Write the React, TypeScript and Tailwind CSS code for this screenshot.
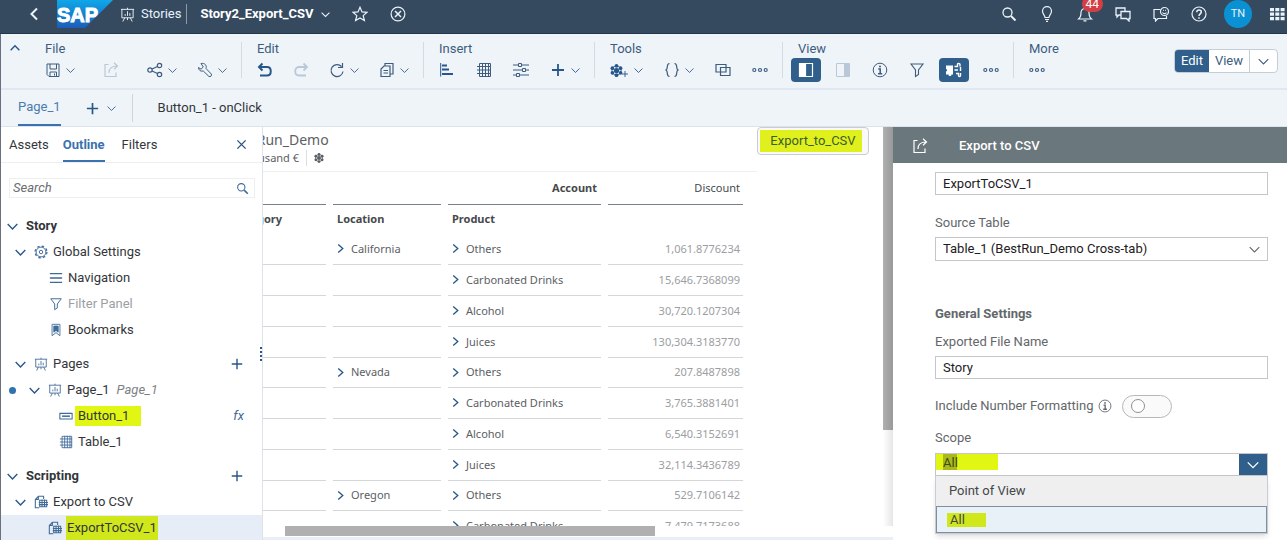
import { useState } from 'react';
import type { ReactNode } from 'react';
import clsx from 'clsx';

type IconProps = {
  children: ReactNode;
  className?: string;
  width?: string;
};

const Icon = ({ children, className = 'size-4', width = '1' }: IconProps) => (
  <svg
    viewBox="0 0 16 16"
    fill="none"
    stroke="currentColor"
    strokeWidth={width}
    className={clsx('shrink-0', className)}
    aria-hidden="true"
  >
    {children}
  </svg>
);

const ChevronDown = ({ className = 'w-[9px] h-[9px]', width = '1.8' }) => (
  <Icon className={className} width={width}>
    <path d="M1 4.5l7 7 7-7" />
  </Icon>
);

const BoardIcon = ({ className = 'size-4' }) => (
  <Icon className={className}>
    <path d="M1 2.5h14M2 2.5v9h12v-9M5 11.5l-2 4M11 11.5l2 4M8 11.5v2.5M5.5 9.5v-2M8 9.5v-5M10.5 9.5v-3M8 .8v1.7" />
  </Icon>
);

const GridIcon = ({ className = 'size-4' }) => (
  <Icon className={className}>
    <path d="M3.5 1.5h11v13h-11zM1 4.5h14M1 8h14M1 11.5h14M6.5 1v14M9.5 1v14M12.5 1v14" />
  </Icon>
);

const FunnelIcon = ({ className = 'size-4' }) => (
  <Icon className={className} width="1.1">
    <path d="M2 2h12L9.5 8v4.5L6.5 14.5V8z" />
  </Icon>
);

const InfoIcon = ({ className = 'size-4' }) => (
  <Icon className={className}>
    <circle cx="8" cy="8" r="6.8" />
    <path d="M6.300 7h1.900v4.500M6 11.700h4.200" strokeWidth="1.500" />
    <circle cx="8" cy="4.500" r="1" fill="currentColor" stroke="none" />
  </Icon>
);

const ExportIcon = ({ className = 'size-4' }) => (
  <Icon className={className} width="1.2">
    <path d="M5.500 2.500H2v12h11v-4M6 11c0-5 3-7 8-7M11 .8L14.500 4 11 7.200" />
  </Icon>
);

const SheetIcon = () => (
  <Icon className="size-[14px]" width="1.2">
    <path d="M6 14.500H1.500V5L5 1.500h6v3M5 1.500V5H1.500" />
    <path d="M6.500 6h8v7.500h-8zM5.500 8.500H16M5.500 11H16M9.200 5v9M12 5v9" />
  </Icon>
);

const MoreIcon = () => (
  <Icon width="1.200">
    <circle cx="2.300" cy="8" r="1.500" />
    <circle cx="8" cy="8" r="1.500" />
    <circle cx="13.700" cy="8" r="1.500" />
  </Icon>
);

const PlusIcon = ({ className = 'size-4', width = '1.8' }) => (
  <Icon className={className} width={width}>
    <path d="M8 2v12M2 8h12" />
  </Icon>
);

const SearchIcon = ({ className = 'size-4' }) => (
  <Icon className={className} width="1.3">
    <circle cx="6.500" cy="6.500" r="4.500" />
    <path d="M10 10l4.500 4.500" strokeWidth="2" />
  </Icon>
);

const ModelIcon = ({ className = 'size-4' }) => (
  <Icon className={className} width="1.2">
    <circle cx="8" cy="8" r="3.200" fill="currentColor" stroke="none" />
    <g fill="currentColor" stroke="none">
      <circle cx="8" cy="2.300" r="2.300" />
      <circle cx="13" cy="5.100" r="2.300" />
      <circle cx="13" cy="10.900" r="2.300" />
      <circle cx="8" cy="13.700" r="2.300" />
      <circle cx="3" cy="10.900" r="2.300" />
      <circle cx="3" cy="5.100" r="2.300" />
    </g>
    <circle cx="8" cy="8" r="5.600" />
  </Icon>
);

type ToolProps = {
  label: string;
  children: ReactNode;
  menu?: boolean;
  pressed?: boolean;
  disabled?: boolean;
  className?: string;
};

const Tool = ({ label, children, menu, pressed, disabled, className }: ToolProps) => (
  <button
    aria-label={label}
    disabled={disabled}
    className={clsx(
      'flex h-6 items-center gap-[5px]',
      pressed && '-mx-[7px] rounded-sm bg-[#2f5f8a] px-[7px] text-white',
      disabled && 'text-[#b9c8d8]',
      className
    )}
  >
    {children}
    {menu && <ChevronDown width="1.6" />}
  </button>
);

type GroupProps = {
  title: string;
  children: ReactNode;
  last?: boolean;
  className?: string;
};

const Group = ({ title, children, last, className = 'gap-[21px] pl-[15px]' }: GroupProps) => (
  <section className="flex py-2">
    <div className="pr-[14px]">
      <h2 className={clsx('flex h-[14px] text-[13px] leading-[14px]', className)}>{title}</h2>
      <div className={clsx('mt-[2px] flex items-center', className)}>{children}</div>
    </div>
    {!last && <div className="h-9 w-px bg-[#d3dce5]" />}
  </section>
);

const ShellBar = () => (
  <header className="flex h-[34px] shrink-0 items-center border-b border-[#22364c] bg-[#354a5f] pr-[2px] pb-[5px] text-[13px] text-[#eaf3fb]">
    <button aria-label="Back" className="ml-[26px]">
      <Icon width="2">
        <path d="M11 2.500L5.500 8l5.500 5.500" />
      </Icon>
    </button>
    <svg viewBox="0 0 56 28" className="ml-[15px] h-7 w-14" role="img" aria-label="SAP">
      <defs>
        <linearGradient id="sap" x1="0" y1="0" x2="0" y2="1">
          <stop offset="0" stopColor="#0fa7e8" />
          <stop offset="1" stopColor="#1c5cb8" />
        </linearGradient>
      </defs>
      <path d="M0 0h56L28 28H0z" fill="url(#sap)" />
      <text
        x="0"
        y="22"
        fontFamily="Liberation Sans, sans-serif"
        fontSize="20"
        fontWeight="700"
        fill="#fff"
        stroke="#fff"
        strokeWidth="1"
      >
        SAP
      </text>
    </svg>
    <a href="#stories" className="ml-[7px] flex items-center gap-[6px]">
      <BoardIcon className="size-[15px]" />
      Stories
    </a>
    <div className="ml-[5px] h-5 w-px bg-[#8d9baa]" />
    <h1 className="ml-[13px] font-bold text-white">Story2_Export_CSV</h1>
    <button aria-label="Story menu" className="ml-[7px]">
      <ChevronDown />
    </button>
    <button aria-label="Add to favorites" className="ml-[22px]">
      <Icon width="1.200">
        <path d="M8 1.200l2 4.700 5.100.4-3.900 3.300 1.200 5L8 11.900l-4.400 2.700 1.200-5L.9 6.300l5.100-.4z" />
      </Icon>
    </button>
    <button aria-label="Close story" className="ml-[22px]">
      <Icon width="1.200">
        <circle cx="8" cy="8" r="6.900" />
        <path d="M5 5l6 6M11 5l-6 6" strokeWidth="1.500" />
      </Icon>
    </button>
    <nav className="ml-auto flex items-center gap-[22px]">
      <button aria-label="Search">
        <SearchIcon />
      </button>
      <button aria-label="Tips">
        <Icon width="1.200">
          <path d="M6 11.500C6 9.500 3.500 8 3.500 5.200a4.500 4.500 0 019 0C12.500 8 10 9.500 10 11.500zM6 13.500h4M7 15.300h2" />
        </Icon>
      </button>
      <button aria-label="Notifications" className="relative">
        <Icon width="1.200">
          <path d="M1.500 13h13C12.500 11.500 12 9 12 6.500a4 4 0 00-8 0C4 9 3.500 11.500 1.500 13zM6.500 14.800h3" />
        </Icon>
        <span className="absolute -top-[10px] -right-[10px] flex h-4 items-center rounded-full bg-[#d33f45] px-1 text-xs text-white">
          44
        </span>
      </button>
      <button aria-label="Chat">
        <Icon width="1.300">
          <path d="M6 9H4L2 11V9H1V2h9v3M6 5.500h9v7h-1v2.500l-2.500-2.500H6z" />
        </Icon>
      </button>
      <button aria-label="Feedback">
        <Icon width="1.200">
          <path d="M7.500 3.500H1v9h1.500V15l2.500-2.500h8.500V10" />
          <circle cx="11.500" cy="5.500" r="4" />
          <path d="M9.500 6.500c1 1.500 3 1.500 4 0M10 4.300h.8M12.200 4.300h.8" />
        </Icon>
      </button>
      <button aria-label="Help">
        <Icon width="1.200">
          <circle cx="8" cy="8" r="7" />
          <path d="M5.800 6.300c0-3 4.500-2.800 4.500-.2C10.300 7.800 8 8 8 10M8 11.200v1.500" strokeWidth="1.500" />
        </Icon>
      </button>
      <button
        aria-label="Profile"
        className="-mx-[5px] flex size-7 items-center justify-center rounded-full bg-[#0a91d3] text-[11px]"
      >
        TN
      </button>
      <button aria-label="Products">
        <Icon>
          <path
            d="M1 2h4v3.300H1zM6.300 2h4v3.300h-4zM11.600 2h4v3.300h-4zM1 6.500h4v3.300H1zM6.300 6.500h4v3.300h-4zM11.600 6.500h4v3.300h-4zM1 11h4v3.300H1zM6.300 11h4v3.300h-4zM11.600 11h4v3.300h-4z"
            fill="currentColor"
            stroke="none"
          />
        </Icon>
      </button>
    </nav>
  </header>
);

const Toolbar = () => (
  <div className="flex h-14 shrink-0 items-start border-b-2 border-[#dfe8f2] bg-[#eff4f9] text-[#3d5c7e]">
    <button aria-label="Collapse toolbar" className="mt-[9px] ml-[9px] w-5 text-[#27568a]">
      <Icon className="size-[10px]" width="2.200">
        <path d="M1 11.500l7-7 7 7" />
      </Icon>
    </button>
    <Group title="File" className="gap-5 pl-[15px]">
      <Tool label="Save" menu>
        <Icon>
          <path d="M2 2h12v12.500H4L2 12.500zM5 2v5h6.500V2M5 14.500V10h6.500v4.500M9.500 11.500v2" />
        </Icon>
      </Tool>
      <Tool label="Publish" disabled className="px-2">
        <ExportIcon />
      </Tool>
      <Tool label="Share" menu>
        <Icon width="1.200">
          <circle cx="3" cy="8" r="2.200" />
          <circle cx="12.500" cy="3.500" r="2.200" />
          <circle cx="12.500" cy="12.500" r="2.200" />
          <path d="M5 7l5.500-2.500M5 9l5.500 2.500" />
        </Icon>
      </Tool>
      <Tool label="Settings" menu>
        <Icon>
          <path d="M4 1.500C8 .8 10 3.500 9 6.500l5.300 5.500c1 1.500-1 3.500-2.500 2.300L6.300 9C3.500 9.800 1.500 8 1.500 5.500L4 7.200 6.300 5z" />
        </Icon>
      </Tool>
    </Group>
    <Group title="Edit" className="gap-5 pl-[15px]">
      <Tool label="Undo" className="text-[#27568a]">
        <Icon width="2">
          <path d="M5.500 1.500L2 5l3.500 3.500M2 5h8c5 0 5 8.500 0 8.500H3" />
        </Icon>
      </Tool>
      <Tool label="Redo" disabled>
        <Icon width="1.800">
          <path d="M10.500 1.500L14 5l-3.500 3.500M14 5H6c-5 0-5 8.500 0 8.500h7" />
        </Icon>
      </Tool>
      <Tool label="Refresh" menu>
        <Icon width="1.200">
          <path d="M14 9.500A6 6 0 1112.500 4.500M13.500 1v4.500H9" />
        </Icon>
      </Tool>
      <Tool label="Copy" menu>
        <Icon width="1.200">
          <path d="M6 4V1.500h8V12h-3M2 7l3-3h6v10.500H2zM4.500 8.500H9M4.500 11H9" />
        </Icon>
      </Tool>
    </Group>
    <Group title="Insert">
      <Tool label="Chart" className="text-[#27568a]">
        <Icon width="2">
          <path d="M1.700 1v13.500" strokeWidth="1" />
          <path d="M3 3.500h5M3 7.500h7M3 12h11" />
        </Icon>
      </Tool>
      <Tool label="Table">
        <GridIcon />
      </Tool>
      <Tool label="Input control">
        <Icon>
          <path d="M0 3h5.500M8.500 3H16M0 8h9.500M12.500 8H16M0 13h3.500M6.500 13H16M5.500 1.500h3v3h-3zM9.500 6.500h3v3h-3zM3.500 11.500h3v3h-3z" />
        </Icon>
      </Tool>
      <Tool label="Add" menu className="text-[#27568a]">
        <PlusIcon />
      </Tool>
    </Group>
    <Group title="Tools">
      <Tool label="Add model" menu className="text-[#27568a]">
        <ModelIcon className="size-[13px]" />
        <PlusIcon className="-ml-[7px] mt-2 size-2" />
      </Tool>
      <Tool label="Script" menu>
        <Icon width="1.200">
          <path d="M5.500 1.500c-4 0-.5 6-4 6.500 3.500.5 0 6.500 4 6.500M10.500 1.500c4 0 .5 6 4 6.500-3.500.5 0 6.500-4 6.500" />
        </Icon>
      </Tool>
      <Tool label="Arrange">
        <Icon width="1.200">
          <path d="M1 2.500h10v7.500H1zM5.500 5.500H15V13.500H5.500z" />
        </Icon>
      </Tool>
      <Tool label="More tools">
        <MoreIcon />
      </Tool>
    </Group>
    <Group title="View">
      <Tool label="Left panel" pressed>
        <Icon width="1.200">
          <path d="M1.500 1.500h13v13h-13z" />
          <path d="M2 2h5.500v12H2z" fill="currentColor" />
        </Icon>
      </Tool>
      <Tool label="Right panel" disabled>
        <Icon>
          <path d="M1.500 1.500h13v13h-13z" />
          <path d="M9.500 2h5v12h-5z" fill="currentColor" />
        </Icon>
      </Tool>
      <Tool label="Info">
        <InfoIcon />
      </Tool>
      <Tool label="Filter">
        <FunnelIcon />
      </Tool>
      <Tool label="Linked widgets" pressed>
        <Icon width="1.400">
          <path d="M0 3.500h7v9H5.500c0 2-3 2-3 0H0V9.500c1.500 0 1.500-2.500 0-2.500z" fill="currentColor" stroke="none" />
          <path d="M8.500 4.500h3v-2c0-1.500 2.500-1.500 2.500 0v2M8.500 8h3.500M10 11.500h2.500v2c0 1.500 2 1.500 2 0V11M14.500 5v4" />
        </Icon>
      </Tool>
      <Tool label="More views">
        <MoreIcon />
      </Tool>
    </Group>
    <Group title="More" last>
      <Tool label="More actions">
        <MoreIcon />
      </Tool>
    </Group>
    <div className="mt-[15px] mr-[9px] ml-auto flex h-6 overflow-hidden rounded-sm border border-[#c3ced9] bg-white text-[13px]">
      <button className="bg-[#2f5f8a] px-[6px] text-white">Edit</button>
      <button className="px-[6px]">View</button>
      <button aria-label="View options" className="border-l border-[#c3ced9] px-2">
        <ChevronDown className="size-[11px]" width="1.600" />
      </button>
    </div>
  </div>
);

const PageTabs = () => (
  <div className="flex h-[37px] shrink-0 border-b border-[#dbe4ee] bg-[#eff4f9] pl-[17px] text-[13px] text-[#32363a]">
    <button className="border-b-2 border-[#3a72ae] text-[#4a7cae]">Page_1</button>
    <button aria-label="Add page" className="ml-6 flex items-center gap-[7px] text-[#27568a]">
      <PlusIcon className="size-[15px]" />
      <ChevronDown width="1.500" />
    </button>
    <div className="mt-1 ml-4 h-7 w-px bg-[#cdd6df]" />
    <button className="ml-[25px]">Button_1 - onClick</button>
  </div>
);

type RowProps = {
  icon?: ReactNode;
  label: ReactNode;
  indent: string;
  open?: boolean;
  className?: string;
  children?: ReactNode;
};

const TreeRow = ({ icon, label, indent, open, className, children }: RowProps) => (
  <li className={clsx('flex h-[26px] items-center pr-[18px]', indent, className)}>
    {open && (
      <button aria-label="Collapse" className="mr-2 text-[#27568a]">
        <ChevronDown className="size-[11px]" width="2" />
      </button>
    )}
    {icon && <span className="mr-[5px] text-[#3f6a99]">{icon}</span>}
    {label}
    {children}
  </li>
);

const AddButton = ({ label }: { label: string }) => (
  <button aria-label={label} className="ml-auto text-[#27568a]">
    <PlusIcon className="size-[14px]" width="1.600" />
  </button>
);

const OutlinePanel = () => {
  const [search, setSearch] = useState<string>('');

  return (
    <aside className="flex w-[262px] shrink-0 flex-col border-r border-[#dfe3e8] text-[13px] text-[#32363a]">
      <div className="flex h-9 shrink-0 items-center border-b border-[#eceef0] pl-2">
        <button className="self-stretch">Assets</button>
        <button className="ml-[14px] self-stretch border-b-2 border-[#3a72ae] pt-[2px] font-bold text-[#3a72ae]">
          Outline
        </button>
        <button className="ml-[17px] self-stretch">Filters</button>
        <button aria-label="Close panel" className="mr-[15px] ml-auto text-[#27568a]">
          <Icon className="size-[11px]" width="2">
            <path d="M2 2l12 12M14 2L2 14" />
          </Icon>
        </button>
      </div>
      <label className="mt-[15px] mr-[7px] ml-2 flex h-5 shrink-0 items-center border border-[#efefef] pr-[5px] pl-[3px]">
        <input
          type="text"
          value={search}
          onChange={(e) => setSearch(e.target.value)}
          placeholder="Search"
          aria-label="Search"
          className="min-w-0 flex-1 outline-none placeholder:text-[#6a6d70] placeholder:italic"
        />
        <span className="text-[#3f6a99]">
          <SearchIcon className="size-[13px]" />
        </span>
      </label>
      <ul className="mt-[15px]">
        <TreeRow indent="pl-[6px]" open label={<b>Story</b>} />
        <TreeRow
          indent="pl-[14px]"
          open
          icon={
            <Icon className="size-[14px]" width="1.100">
              <circle cx="8" cy="8" r="2" />
              <circle cx="8" cy="8" r="5.600" />
              <circle cx="8" cy="8" r="6.800" strokeWidth="1.400" strokeDasharray="2.800 2.541" />
            </Icon>
          }
          label="Global Settings"
        />
        <TreeRow
          indent="pl-[48px]"
          icon={
            <Icon className="size-[14px]" width="1.700">
              <path d="M1 3h14M1 8h14M1 13h14" />
            </Icon>
          }
          label="Navigation"
        />
        <TreeRow
          indent="pl-[48px]"
          icon={<FunnelIcon className="size-[14px]" />}
          label={<span className="text-[#9c9fa3]">Filter Panel</span>}
        />
        <TreeRow
          indent="pl-[48px]"
          icon={
            <Icon className="size-[14px]">
              <path d="M3.500 1.500h9v13L8 11l-4.500 3.500z" />
              <path d="M5.500 3.500h5v7L8 8.500l-2.500 2z" fill="currentColor" />
            </Icon>
          }
          label="Bookmarks"
        />
        <TreeRow
          indent="pl-[14px]"
          className="mt-2"
          open
          icon={<BoardIcon className="size-[14px]" />}
          label="Pages"
        >
          <AddButton label="Add page" />
        </TreeRow>
        <TreeRow
          indent="pl-[8px]"
          icon={<span className="mr-2 block size-[7px] rounded-full bg-[#2f72b0]" />}
          label={
            <>
              <button aria-label="Collapse" className="mr-2 text-[#27568a]">
                <ChevronDown className="size-[11px]" width="2" />
              </button>
              <span className="mr-[5px] text-[#3f6a99]">
                <BoardIcon className="size-[14px]" />
              </span>
              Page_1
            </>
          }
        >
          <i className="ml-[7px] text-[#7d8185]">Page_1</i>
        </TreeRow>
        <TreeRow
          indent="pl-[58px]"
          icon={
            <Icon className="size-[14px]" width="1.200">
              <path d="M1 5h14v6.500H1z" />
              <path d="M3.500 8.200h9" strokeWidth="1.700" />
            </Icon>
          }
          label={<span className="-ml-[3px] w-[66px] bg-[#e2f613] pl-[3px]">Button_1</span>}
        >
          <button aria-label="Edit script" className="ml-auto text-[#3f6a99] italic">
            fx
          </button>
        </TreeRow>
        <TreeRow indent="pl-[58px]" icon={<GridIcon className="size-[14px]" />} label="Table_1" />
        <TreeRow indent="pl-[6px]" className="mt-2" open label={<b>Scripting</b>}>
          <AddButton label="Add script object" />
        </TreeRow>
        <TreeRow indent="pl-[14px]" open icon={<SheetIcon />} label="Export to CSV" />
        <TreeRow
          indent="pl-[47px]"
          className="bg-[#e7edf6]"
          icon={<SheetIcon />}
          label={
            <span className="-ml-px bg-[#d0e71b] px-px leading-6">ExportToCSV_1</span>
          }
        />
      </ul>
    </aside>
  );
};

type DataRow = {
  category?: string;
  location?: string;
  product: string;
  discount: string;
};

const rows: DataRow[] = [
  { category: 'All', location: 'California', product: 'Others', discount: '1,061.8776234' },
  { product: 'Carbonated Drinks', discount: '15,646.7368099' },
  { product: 'Alcohol', discount: '30,720.1207304' },
  { product: 'Juices', discount: '130,304.3183770' },
  { location: 'Nevada', product: 'Others', discount: '207.8487898' },
  { product: 'Carbonated Drinks', discount: '3,765.3881401' },
  { product: 'Alcohol', discount: '6,540.3152691' },
  { product: 'Juices', discount: '32,114.3436789' },
  { location: 'Oregon', product: 'Others', discount: '529.7106142' },
  { product: 'Carbonated Drinks', discount: '7,479.7173688' },
];

const Member = ({ name }: { name?: string }) =>
  name ? (
    <span className="flex items-center gap-[6px]">
      <Icon className="size-[9px] text-[#27568a]" width="2.400">
        <path d="M4 1l8 7-8 7" />
      </Icon>
      {name}
    </span>
  ) : null;

const Gap = () => <td className="w-[7px] p-0" />;

const CrossTab = () => (
  <table className="w-[517px] shrink-0 table-fixed border-collapse text-[11px] leading-4 text-[#5c6064]">
    <thead>
      <tr className="h-8 text-[#46494c]">
        <th className="w-[100px] border-b border-[#75808f]" />
        <Gap />
        <th className="w-[108px] border-b border-[#75808f]" />
        <Gap />
        <th className="w-[153px] border-b border-[#75808f] pr-1 text-right">Account</th>
        <Gap />
        <th className="w-[135px] border-b border-[#75808f] pr-[3px] text-right font-normal">
          Discount
        </th>
      </tr>
      <tr className="h-[30px] text-left text-[#46494c]">
        <th className="pl-[6px]">Category</th>
        <Gap />
        <th className="pl-1">Location</th>
        <Gap />
        <th className="pl-1">Product</th>
        <Gap />
        <th />
      </tr>
    </thead>
    <tbody>
      {rows.map((row, index) => (
        <tr key={index} className={row.location ? 'h-[30px]' : 'h-[31px]'}>
          <td className="border-b border-[#d4d6d8] pl-[9px]">
            <Member name={row.category} />
          </td>
          <Gap />
          <td className="border-b border-[#d4d6d8] pl-[3px]">
            <Member name={row.location} />
          </td>
          <Gap />
          <td className="border-b border-[#d4d6d8] pl-[3px]">
            <Member name={row.product} />
          </td>
          <Gap />
          <td className="border-b border-[#d4d6d8] pr-[3px] text-right text-[#9b9ea2]">
            {row.discount}
          </td>
        </tr>
      ))}
    </tbody>
  </table>
);

const Canvas = () => (
  <main className="relative flex min-w-0 flex-1 flex-col">
    <div className="flex min-h-0 flex-1">
      <div className="flex min-w-0 flex-1 items-start overflow-hidden">
        <section className="-ml-[37px] h-full shrink-0 overflow-hidden font-['Noto_Sans',sans-serif]">
          <div className="h-[45px] w-[531px] border-b border-[#eceeef] pt-[3px] text-[#5c6064]">
            <h2 className="pl-[2px] text-[14px] leading-5">BestRun_Demo</h2>
            <div className="flex h-4 items-center text-[11px]">
              in Thousand €
              <span className="mx-[7px] h-4 w-px bg-[#dcdfe2]" />
              <ModelIcon className="size-[10px]" />
            </div>
          </div>
          <CrossTab />
        </section>
        <button className="shrink-0 rounded-sm border border-[#c9ccd0] bg-[#f9f9f9] py-[2px] pr-[6px] pl-[2px] text-[13px] text-[#3d5c2e]">
          <span className="block w-[102px] bg-[#dff01c] pl-1 leading-[22px]">Export_to_CSV</span>
        </button>
      </div>
      <div className="w-[10px] shrink-0 bg-gradient-to-r from-white to-[#e6e6e6]">
        <div className="h-[303px] bg-gradient-to-r from-[#b0b0b0] to-[#999999]" />
      </div>
    </div>
    <div className="pl-[22px]">
      <div className="h-[10px] w-[370px] bg-[#b0b0b0]" />
    </div>
    <div className="mt-px h-[3px] bg-[#e9eff5]" />
    <div className="absolute top-[220px] -left-[3px] grid gap-[2px]">
      <i className="block size-[2px] bg-[#27568a]" />
      <i className="block size-[2px] bg-[#27568a]" />
      <i className="block size-[2px] bg-[#27568a]" />
      <i className="block size-[2px] bg-[#27568a]" />
    </div>
  </main>
);

const ExportPanel = () => {
  const [name, setName] = useState<string>('ExportToCSV_1');
  const [fileName, setFileName] = useState<string>('Story');
  const [formatting, setFormatting] = useState<boolean>(false);
  const [scope, setScope] = useState<string>('All');

  return (
    <aside className="w-[394px] shrink-0 overflow-hidden bg-white text-[13px] text-[#1d2023]">
      <h2 className="flex h-9 items-center gap-[31px] bg-[#6a777d] pt-[2px] pl-[19px] font-medium text-white">
        <ExportIcon />
        Export to CSV
      </h2>
      <div className="pr-[19px] pl-[42px] text-[#63676b]">
        <input
          aria-label="Name"
          value={name}
          onChange={(e) => setName(e.target.value)}
          className="mt-[9px] block h-[23px] w-full border border-[#c4c6c9] px-[7px] text-[#1d2023]"
        />
        <label htmlFor="source" className="mt-5 block leading-4">
          Source Table
        </label>
        <div className="relative mt-[6px]">
          <select
            id="source"
            className="block h-6 w-full appearance-none border border-[#c4c6c9] bg-white px-[7px] text-[#1d2023]"
          >
            <option>Table_1 (BestRun_Demo Cross-tab)</option>
          </select>
          <span className="pointer-events-none absolute top-[7px] right-2">
            <ChevronDown className="size-[11px]" width="1.600" />
          </span>
        </div>
        <h3 className="mt-[45px] leading-4 font-bold">General Settings</h3>
        <label htmlFor="file" className="mt-3 block leading-4">
          Exported File Name
        </label>
        <input
          id="file"
          value={fileName}
          onChange={(e) => setFileName(e.target.value)}
          className="mt-[6px] block h-[23px] w-full border border-[#c4c6c9] px-[7px] text-[#1d2023]"
        />
        <div className="mt-[15px] flex h-6 items-center">
          <label htmlFor="formatting">Include Number Formatting</label>
          <span className="ml-[5px]">
            <InfoIcon className="size-[14px]" />
          </span>
          <label className="ml-[10px] flex h-[23px] w-[50px] cursor-pointer items-center rounded-full border border-[#b5b8bb] bg-[#fafafa] pl-2">
            <input
              id="formatting"
              type="checkbox"
              checked={formatting}
              onChange={(e) => setFormatting(e.target.checked)}
              className="size-[14px] appearance-none rounded-full border border-[#8d9094] bg-white checked:ml-[18px]"
            />
          </label>
        </div>
        <label htmlFor="scope" className="mt-3 block leading-4">
          Scope
        </label>
        <div className="mt-[7px] flex h-[23px] items-start border border-[#c4c6c9]">
          <input
            id="scope"
            value={scope}
            onChange={(e) => setScope(e.target.value)}
            className="h-4 w-[62px] bg-[linear-gradient(to_right,#e2f613_7px,#aaba1d_7px,#aaba1d_21px,#e2f613_21px)] pt-[2px] pl-[7px] text-[#3f4a10] outline-none"
          />
          <button
            aria-label="Open scope list"
            className="ml-auto flex h-full w-7 items-center justify-center bg-[#2f5f8a] text-white"
          >
            <ChevronDown className="size-3" width="1.800" />
          </button>
        </div>
        <ul
          role="listbox"
          aria-label="Scope"
          className="border border-t-0 border-[#c9ccd0] text-[#44474a] shadow-md"
        >
          <li
            role="option"
            aria-selected={false}
            onClick={() => setScope('Point of View')}
            className="h-[30px] bg-[#efefef] pl-[13px] leading-[30px]"
          >
            Point of View
          </li>
          <li
            role="option"
            aria-selected={true}
            onClick={() => setScope('All')}
            className="flex h-[27px] items-center border border-[#7e8f9f] bg-[#e8f0f8] pl-[10px]"
          >
            <span className="h-[14px] w-[39px] bg-[#d0e71b] pl-[3px] leading-[14px]">All</span>
          </li>
        </ul>
      </div>
    </aside>
  );
};

const App = () => {
  return (
    <div className="flex h-screen flex-col overflow-hidden bg-white font-[Roboto,sans-serif]">
      <ShellBar />
      <div className="flex min-h-0 flex-1 flex-col border-l border-[#6a7080]">
        <Toolbar />
        <PageTabs />
        <div className="flex min-h-0 flex-1">
          <OutlinePanel />
          <Canvas />
          <ExportPanel />
        </div>
      </div>
    </div>
  );
};

export default App;
